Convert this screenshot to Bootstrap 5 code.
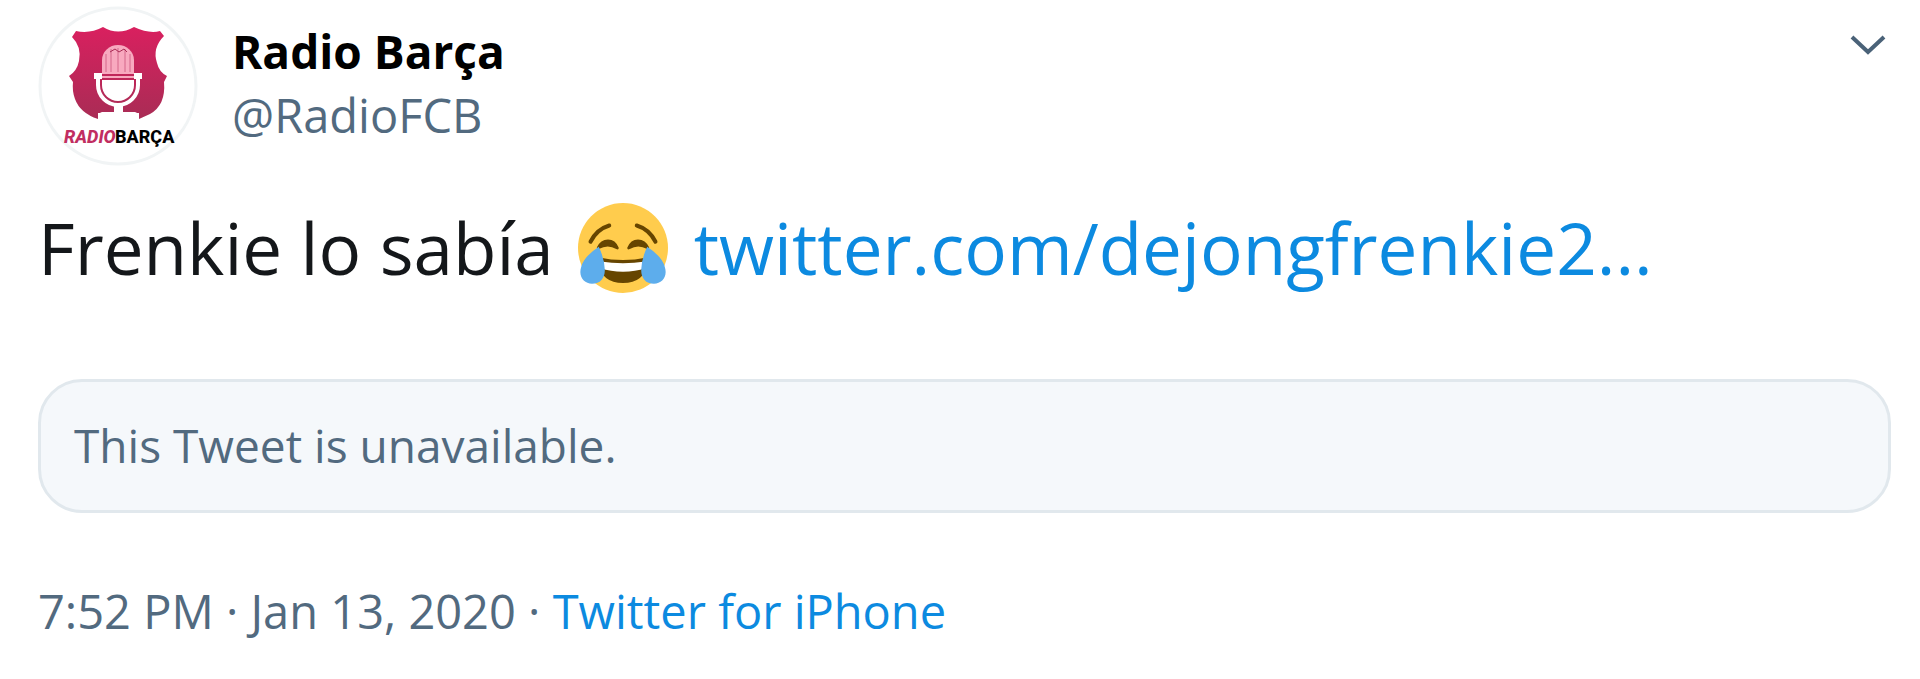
<!DOCTYPE html>
<html lang="es">
<head>
<meta charset="utf-8">
<meta name="viewport" content="width=device-width, initial-scale=1">
<title>Radio Barça (@RadioFCB)</title>
<link href="https://cdn.jsdelivr.net/npm/bootstrap@5.3.0/dist/css/bootstrap.min.css" rel="stylesheet">
<style>
  body { font-family: "Open Sans", "Noto Sans", sans-serif; color: #14171a; background: #fff; }
  .tweet { padding: 6px 29px 16px 38px; }
  .avatar { width: 160px; height: 160px; }
  .author { margin-left: 34px; padding-top: 13px; }
  .meta-text { font-size: 47px; line-height: 64px; color: #526a7f; }
  .author-name { color: #000; font-weight: 700; font-size: 46px; }
  .accent, .accent:hover { color: #0c8ae0; text-decoration: none; }
  .tweet-text { font-size: 71px; line-height: 96px; margin-top: 34px; }
  .emoji { width: 90px; height: 90px; margin: 0 26px 0 24px; }
  .notice { margin-top: 83px; padding: 31px 34px 33px 33px; border: 3px solid #e1e8ed; border-radius: 44px; background: #f5f8fb; font-size: 46px; }
  .footer-line { margin-top: 66px; }
  .caret-btn { margin-top: 26px; margin-right: 2px; }
</style>
</head>
<body>
<main>
<article class="tweet">
  <header class="d-flex align-items-start">
    <svg class="avatar flex-shrink-0" viewBox="0 0 160 160" role="img" aria-label="Radio Barça">
      <defs>
        <linearGradient id="shield" x1="0" y1="0" x2="0" y2="1">
          <stop offset="0" stop-color="#d9205f"/><stop offset="1" stop-color="#a92c55"/>
        </linearGradient>
      </defs>
      <circle cx="80" cy="80" r="78" fill="#fff" stroke="#f1f4f5" stroke-width="3"/>
      <path fill="url(#shield)" d="M38 25Q52 28 65 21Q80 30 96 21Q111 28 122 25L126 30Q114 42 119 57Q121 66 129 70L126 76Q128 99 112 108L101 113V107H60V113Q42 107 37 93Q34 85 35 76L31 70Q39 65 41 55Q44 41 34 31Z"/>
      <path fill="#f8a9bf" d="M64 68V54a16 15 0 0 1 32 0V68Z"/>
      <path d="M68 48v18M73 43v23M80 42v24M87 43v23M92 48v18" stroke="#d4668a" stroke-width="1" fill="none"/>
      <path d="M72 46l5-3 4 3 5-3 3 3" stroke="#a92c55" stroke-width="1" fill="none"/>
      <path fill="#fff" d="M64 74H96V79a16 16 0 0 1-32 0Z"/>
      <path fill="#f8a9bf" d="M64 70h32v2H64Z"/>
      <path fill="none" stroke="#fff" stroke-width="4" d="M60 70v9a20 20 0 0 0 40 0V70"/>
      <path fill="#fff" d="M56 67h8v6h-8ZM96 67h8v6h-8ZM76 99h9v7h12q4 1 4 7H60q0-6 4-7h12Z"/>
      <g font-family="Roboto, Liberation Sans, sans-serif" font-size="18" font-weight="800">
        <text x="26" y="137" font-style="italic" fill="#c12e61">RADIO</text>
        <text x="77" y="137" fill="#000">BARÇA</text>
      </g>
    </svg>
    <div class="author flex-grow-1">
      <div class="meta-text author-name">Radio Barça</div>
      <div class="meta-text">@RadioFCB</div>
    </div>
    <button type="button" class="caret-btn btn p-0 border-0 d-flex" aria-label="More">
      <svg width="42" height="24" viewBox="0 0 42 24"><path d="M5 5L21 20L37 5" fill="none" stroke="#4a6278" stroke-width="4"/></svg>
    </button>
  </header>

  <div class="tweet-text d-flex flex-wrap align-items-center">
    <span>Frenkie lo sabía</span>
    <svg class="emoji" viewBox="0 0 36 36" role="img" aria-label="Face with tears of joy">
      <circle cx="18" cy="18" r="18" fill="#ffcc4d"/>
      <path d="M5 15.500Q7.500 10.500 12.500 9M31 15.500Q28.500 10.500 23.500 9" fill="none" stroke="#664500" stroke-width="1.600" stroke-linecap="round"/>
      <path fill="#664500" d="M7.500 17.800Q9 14.600 12 14.600T16.300 17.900Q16.300 18.900 15.300 18.400Q12 16.400 8.300 18.400ZM28.500 17.800Q27 14.600 24 14.600T19.700 17.900Q19.700 18.900 20.700 18.400Q24 16.400 27.700 18.400ZM18 22.800Q13 22.800 9 21.900Q8 22 8 24Q9.500 32 18 32T28 24Q28 22 27 21.900Q23 22.800 18 22.800Z"/>
      <path fill="#fff" d="M9 23.400Q18 24.800 27 23.400V26Q23 27.500 18 27.500T9 26Z"/>
      <path fill="#5dadec" d="M8.300 17.500Q2.300 21.500 1.300 25.500C0 29.500 2.400 32.300 5.600 32.300C9 32.300 10.900 29.800 10.700 26.500Q10.500 22 8.300 17.500ZM27.700 17.500Q33.700 21.500 34.700 25.500C36 29.500 33.600 32.300 30.400 32.300C27 32.300 25.100 29.800 25.300 26.500Q25.500 22 27.700 17.500Z"/>
    </svg>
    <a class="accent" href="#">twitter.com/dejongfrenkie2...</a>
  </div>

  <div class="notice meta-text">This Tweet is unavailable.</div>

  <footer class="footer-line meta-text">7:52 PM · Jan 13, 2020 · <a class="accent" href="#">Twitter for iPhone</a></footer>
</article>
</main>
<script src="https://cdn.jsdelivr.net/npm/bootstrap@5.3.0/dist/js/bootstrap.bundle.min.js"></script>
</body>
</html>
